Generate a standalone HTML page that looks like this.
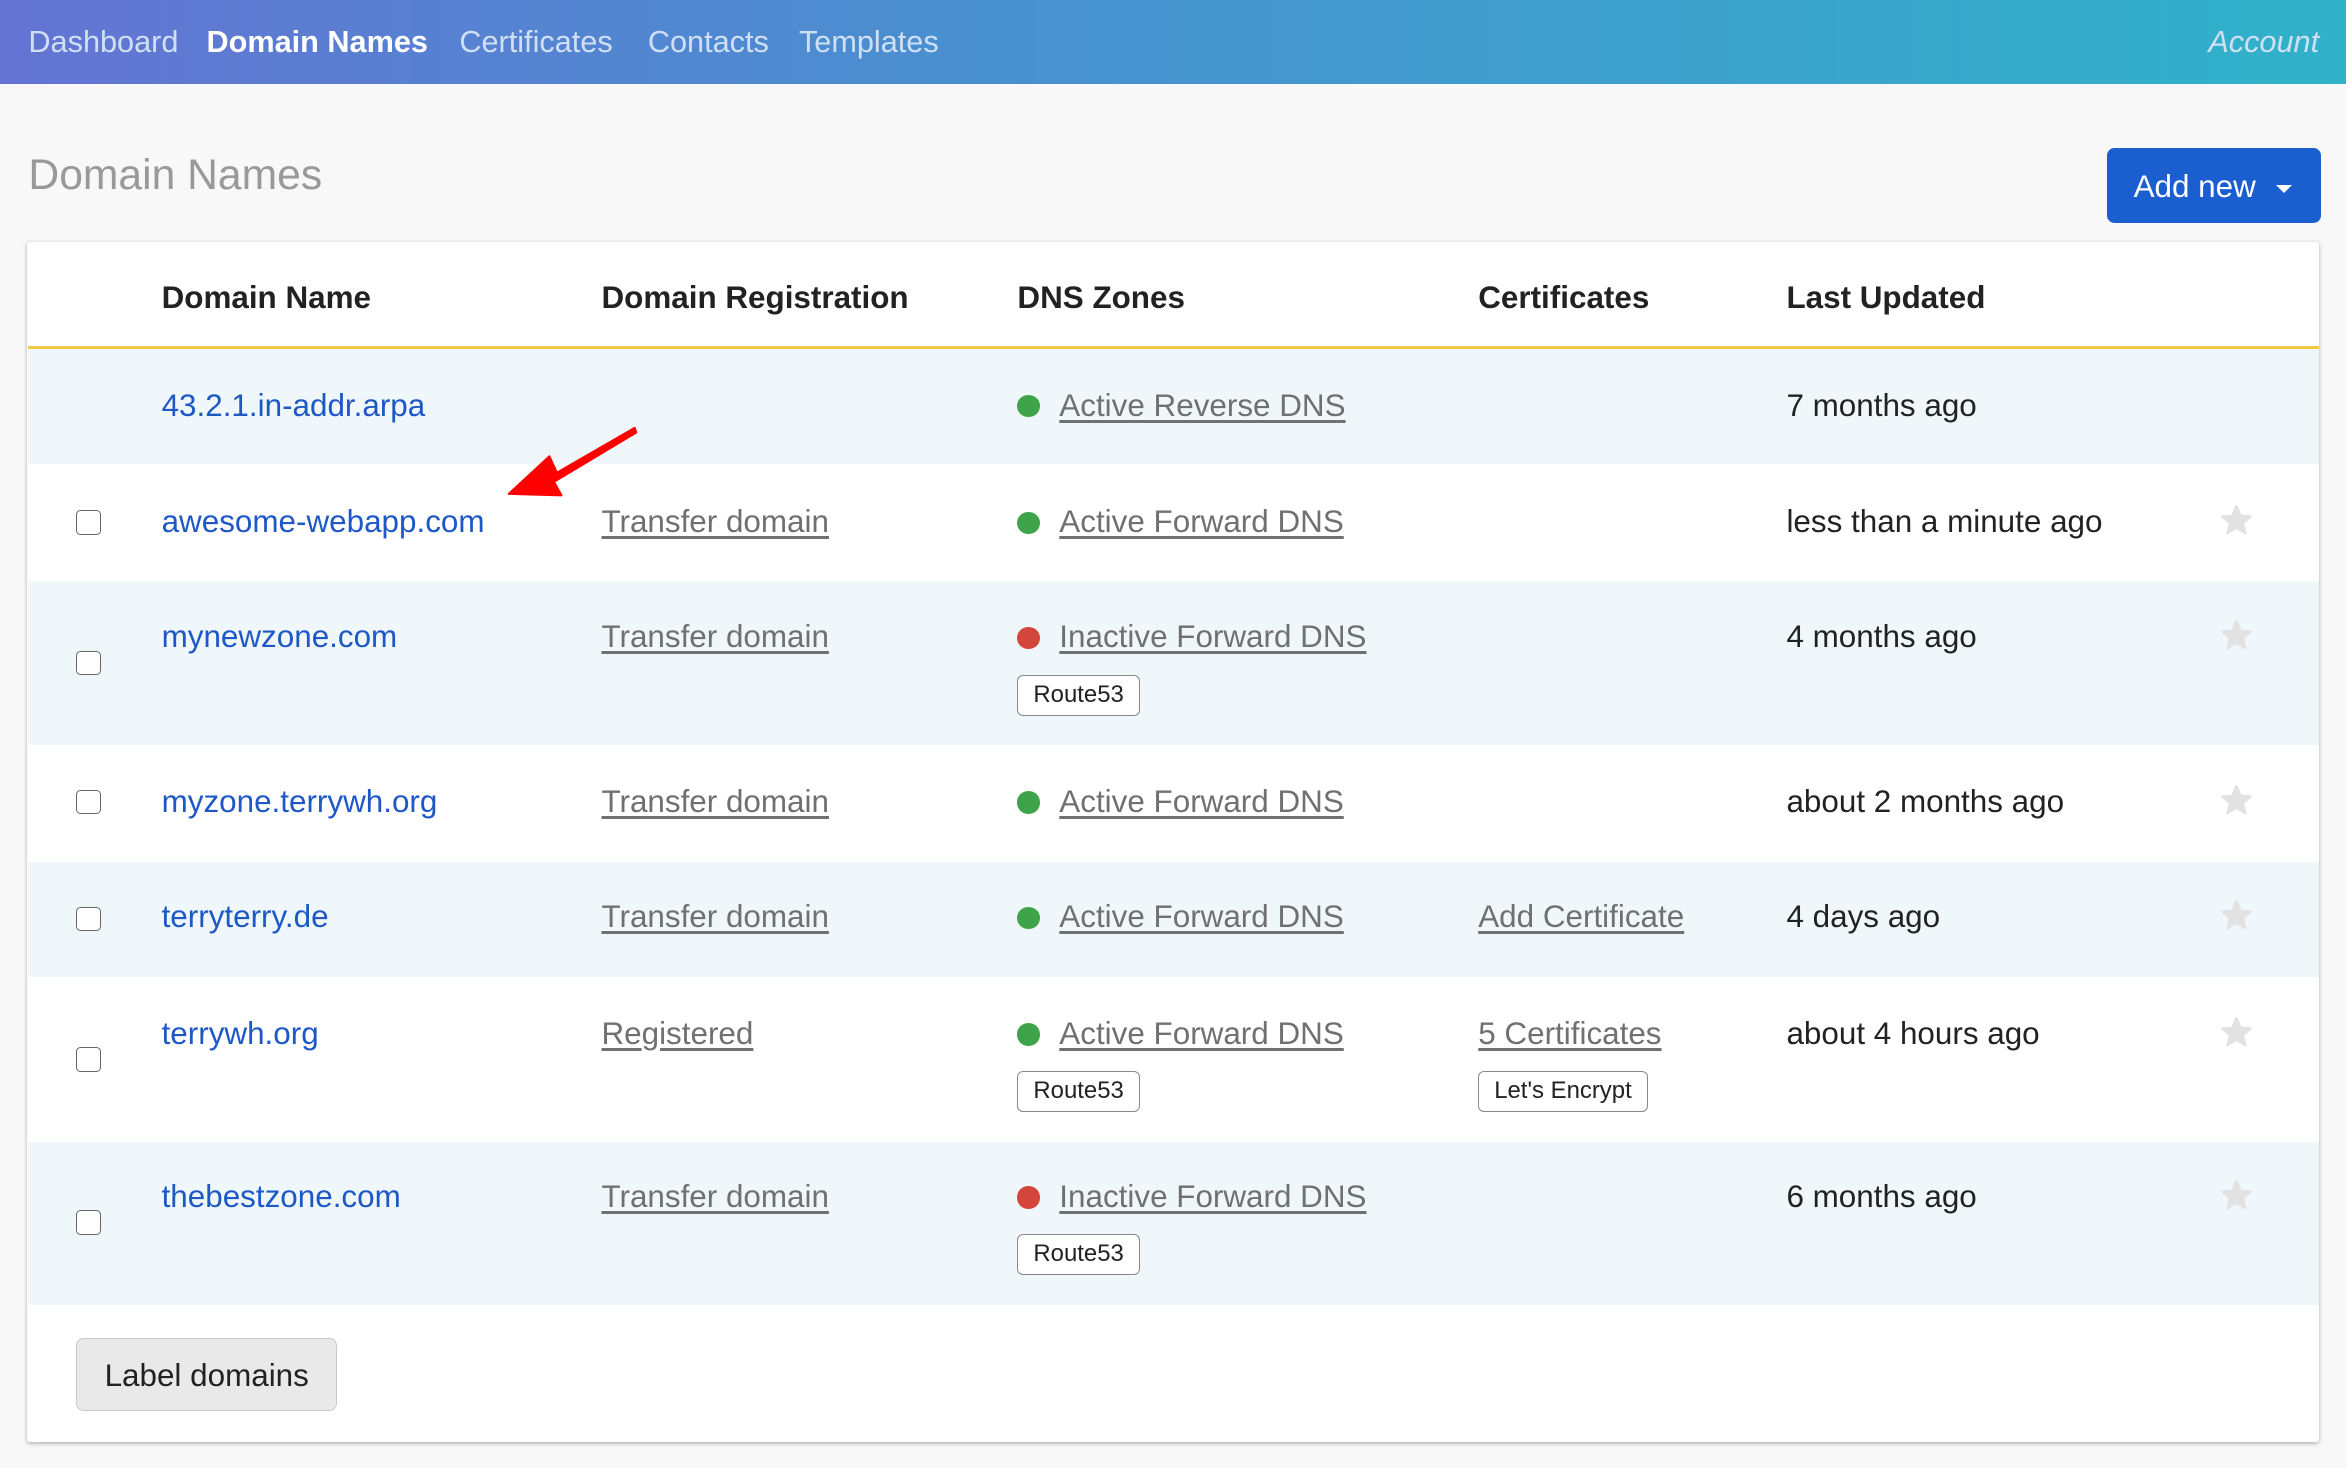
<!DOCTYPE html>
<html><head><meta charset="utf-8"><style>
html,body{margin:0;padding:0}
body{width:1568px;height:981.2px;zoom:1.4962;background:#f8f8f8;font-family:"Liberation Sans",sans-serif;position:relative;overflow:hidden;color:#222}
.a{position:absolute;white-space:nowrap}
.nav{position:absolute;left:0;top:0;width:1568px;height:56px;background:linear-gradient(90deg,#6474d3,#4a8fd0 40%,#30b2c9)}
.nav span{position:absolute;top:17px;font-size:20.5px;color:#cfe0f5}
.card{position:absolute;left:18px;top:162px;width:1532px;height:802px;background:#fff;box-shadow:0 1px 3px rgba(0,0,0,.3);border-radius:2px}
.th{position:absolute;top:187px;font-size:21px;font-weight:bold;color:#222}
.row{position:absolute;left:19px;width:1531px}
.b{background:#f0f7fb}
.t{position:absolute;font-size:21px;white-space:nowrap;margin-top:1px}
.lk{color:#1d58c6}
.u{color:#707070;text-decoration:underline;text-underline-offset:3px}
.dot{position:absolute;width:15px;height:15px;border-radius:50%}
.g{background:#3fa449}.r{background:#d4463b}
.cb{position:absolute;left:51px;width:15px;height:15px;border:1.3px solid #666;border-radius:3px;background:#fff}
.bd{position:absolute;height:26px;border:1px solid #888;border-radius:4px;font-size:16px;line-height:26px;padding:0 10px;color:#222;background:#fff}
.st{position:absolute;left:1484px;width:22px;height:22px}
</style></head><body>
<svg width="0" height="0" style="position:absolute"><defs><symbol id="s" viewBox="0 0 24 24"><path d="M12 1.5l3.1 7 7.4.6-5.6 4.9 1.7 7.4L12 17.5l-6.6 3.9 1.7-7.4L1.5 9.1l7.4-.6z" fill="#e2e2e2" stroke="#e2e2e2" stroke-width="1.5" stroke-linejoin="round"/></symbol></defs></svg>
<div class="nav">
<span style="left:19px">Dashboard</span>
<span style="left:138px;color:#fff;font-weight:bold">Domain Names</span>
<span style="left:307px">Certificates</span>
<span style="left:433px">Contacts</span>
<span style="left:534px">Templates</span>
<span style="right:18px;font-style:italic">Account</span>
</div>
<div class="a" style="left:19px;top:101px;font-size:28.5px;color:#999">Domain Names</div>
<div class="a" style="left:1408px;top:99px;width:143px;height:50px;background:#1a5ed0;border-radius:5px;color:#fff;font-size:21px;line-height:52px;text-indent:18px">Add new <span style="display:inline-block;border-left:6px solid transparent;border-right:6px solid transparent;border-top:6px solid #fff;vertical-align:middle;margin-left:8px"></span></div>
<div class="card"></div>
<div class="th" style="left:108px">Domain Name</div>
<div class="th" style="left:402px">Domain Registration</div>
<div class="th" style="left:680px">DNS Zones</div>
<div class="th" style="left:988px">Certificates</div>
<div class="th" style="left:1194px">Last Updated</div>
<div class="a" style="left:19px;top:231px;width:1531px;height:2px;background:#f4c842"></div>

<div class="row b" style="top:233px;height:77px"></div>
<div class="row" style="top:310px;height:78px"></div>
<div class="row b" style="top:388px;height:110px"></div>
<div class="row" style="top:498px;height:78px"></div>
<div class="row b" style="top:576px;height:77px"></div>
<div class="row" style="top:653px;height:110px"></div>
<div class="row b" style="top:763px;height:109px"></div>

<div class="t lk" style="left:108px;top:258px">43.2.1.in-addr.arpa</div>
<div class="dot g" style="left:680px;top:264px"></div>
<div class="t u" style="left:708px;top:258px">Active Reverse DNS</div>
<div class="t" style="left:1194px;top:258px">7 months ago</div>

<div class="cb" style="top:341px"></div>
<div class="t lk" style="left:108px;top:336px">awesome-webapp.com</div>
<div class="t u" style="left:402px;top:336px">Transfer domain</div>
<div class="dot g" style="left:680px;top:342px"></div>
<div class="t u" style="left:708px;top:336px">Active Forward DNS</div>
<div class="t" style="left:1194px;top:336px">less than a minute ago</div>
<svg class="st" style="top:337px"><use href="#s"/></svg>

<div class="cb" style="top:435px"></div>
<div class="t lk" style="left:108px;top:413px">mynewzone.com</div>
<div class="t u" style="left:402px;top:413px">Transfer domain</div>
<div class="dot r" style="left:680px;top:419px"></div>
<div class="t u" style="left:708px;top:413px">Inactive Forward DNS</div>
<div class="bd" style="left:680px;top:451px">Route53</div>
<div class="t" style="left:1194px;top:413px">4 months ago</div>
<svg class="st" style="top:414px"><use href="#s"/></svg>

<div class="cb" style="top:528px"></div>
<div class="t lk" style="left:108px;top:523px">myzone.terrywh.org</div>
<div class="t u" style="left:402px;top:523px">Transfer domain</div>
<div class="dot g" style="left:680px;top:529px"></div>
<div class="t u" style="left:708px;top:523px">Active Forward DNS</div>
<div class="t" style="left:1194px;top:523px">about 2 months ago</div>
<svg class="st" style="top:524px"><use href="#s"/></svg>

<div class="cb" style="top:606px"></div>
<div class="t lk" style="left:108px;top:600px">terryterry.de</div>
<div class="t u" style="left:402px;top:600px">Transfer domain</div>
<div class="dot g" style="left:680px;top:606px"></div>
<div class="t u" style="left:708px;top:600px">Active Forward DNS</div>
<div class="t u" style="left:988px;top:600px">Add Certificate</div>
<div class="t" style="left:1194px;top:600px">4 days ago</div>
<svg class="st" style="top:601px"><use href="#s"/></svg>

<div class="cb" style="top:700px"></div>
<div class="t lk" style="left:108px;top:678px">terrywh.org</div>
<div class="t u" style="left:402px;top:678px">Registered</div>
<div class="dot g" style="left:680px;top:684px"></div>
<div class="t u" style="left:708px;top:678px">Active Forward DNS</div>
<div class="bd" style="left:680px;top:716px">Route53</div>
<div class="t u" style="left:988px;top:678px">5 Certificates</div>
<div class="bd" style="left:988px;top:716px">Let's Encrypt</div>
<div class="t" style="left:1194px;top:678px">about 4 hours ago</div>
<svg class="st" style="top:679px"><use href="#s"/></svg>

<div class="cb" style="top:809px"></div>
<div class="t lk" style="left:108px;top:787px">thebestzone.com</div>
<div class="t u" style="left:402px;top:787px">Transfer domain</div>
<div class="dot r" style="left:680px;top:793px"></div>
<div class="t u" style="left:708px;top:787px">Inactive Forward DNS</div>
<div class="bd" style="left:680px;top:825px">Route53</div>
<div class="t" style="left:1194px;top:787px">6 months ago</div>
<svg class="st" style="top:788px"><use href="#s"/></svg>

<div class="a" style="left:51px;top:894px;width:173px;height:48px;background:#e9e9e9;border:1px solid #c8c8c8;border-radius:5px;font-size:21px;line-height:49px;text-align:center;color:#222">Label domains</div>

<svg class="a" style="left:330px;top:280px" width="100" height="60" viewBox="330 280 100 60">
<path d="M424 286 L372 316 L367 305 L340 330 L375 331 L370 322 L425 289 Z" fill="#f00" stroke="#f00" stroke-width="1.5" stroke-linejoin="round"/>
</svg>
</body></html>
